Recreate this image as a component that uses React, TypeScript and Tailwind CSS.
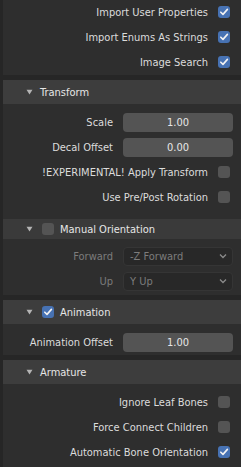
import React from "react";

const font = { fontFamily: '"DejaVu Sans Condensed", "DejaVu Sans", sans-serif' };

function Check({ on, className = "" }: { on: boolean; className?: string }) {
  return (
    <div
      className={
        "w-[12px] h-[12px] rounded-[3px] flex items-center justify-center shrink-0 " +
        (on ? "bg-[#4772b3]" : "bg-[#545454]") +
        " " +
        className
      }
    >
      {on && (
        <svg width="10" height="10" viewBox="0 0 10 10">
          <path d="M1.8 5.2 L4 7.4 L8.4 2.4" fill="none" stroke="#f2f2f2" strokeWidth="1.6" strokeLinecap="round" strokeLinejoin="round" />
        </svg>
      )}
    </div>
  );
}

function Tri() {
  return (
    <svg width="7" height="6" viewBox="0 0 7 6" className="shrink-0">
      <path d="M0.5 0.8 L6.5 0.8 L3.5 5.5 Z" fill="#b4b4b4" />
    </svg>
  );
}

function CheckRow({ label, on, className = "" }: { label: string; on: boolean; className?: string }) {
  return (
    <div className={"flex items-center justify-end h-[20px] pr-[11px] gap-[10px] " + className}>
      <span className="text-[#dcdcdc]">{label}</span>
      <Check on={on} />
    </div>
  );
}

function FieldRow({ label, value, className = "" }: { label: string; value: string; className?: string }) {
  return (
    <div className={"flex items-center h-[20px] gap-[10px] " + className}>
      <span className="w-[110px] text-right text-[#dcdcdc]">{label}</span>
      <div className="w-[110px] h-[19px] rounded-[4px] bg-[#545454] flex items-center justify-center text-[#e6e6e6]">
        {value}
      </div>
    </div>
  );
}

function DropRow({ label, value, className = "" }: { label: string; value: string; className?: string }) {
  return (
    <div className={"flex items-center h-[20px] gap-[10px] " + className}>
      <span className="w-[110px] text-right text-[#7c7c7c]">{label}</span>
      <div className="w-[110px] h-[19px] rounded-[4px] bg-[#282828] border border-[#353535] flex items-center justify-between pl-[6px] pr-[5px] text-[#7c7c7c]">
        <span>{value}</span>
        <svg width="8" height="6" viewBox="0 0 8 6">
          <path d="M1 1.5 L4 4.5 L7 1.5" fill="none" stroke="#8a8a8a" strokeWidth="1.3" />
        </svg>
      </div>
    </div>
  );
}

function Header({ label, check }: { label: string; check?: boolean }) {
  return (
    <div className="flex items-center h-[24px] bg-[#3d3d3d] pl-[23px]">
      <Tri />
      {check !== undefined ? (
        <>
          <Check on={check} className="ml-[9px]" />
          <span className="ml-[6px] text-[#e6e6e6]">{label}</span>
        </>
      ) : (
        <span className="ml-[7px] text-[#e6e6e6]">{label}</span>
      )}
    </div>
  );
}

export default function App() {
  return (
    <div className="w-[241px] h-[467px] bg-[#262626] pl-[3px] overflow-hidden text-[11px] leading-none" style={font}>
      <div className="flex flex-col gap-[5px]">
        {/* top panel */}
        <div className="bg-[#2e2e2e] pt-[2px] pb-[3px] flex flex-col gap-[5px]">
          <CheckRow label="Import User Properties" on />
          <CheckRow label="Import Enums As Strings" on />
          <CheckRow label="Image Search" on />
        </div>

        {/* Transform */}
        <div className="bg-[#2e2e2e]">
          <Header label="Transform" />
          <div className="pt-[8px] flex flex-col gap-[5px]">
            <FieldRow label="Scale" value="1.00" />
            <FieldRow label="Decal Offset" value="0.00" />
            <CheckRow label="!EXPERIMENTAL! Apply Transform" on={false} />
            <CheckRow label="Use Pre/Post Rotation" on={false} />
          </div>
          <div className="mt-[12px]">
            <div className="flex items-center h-[20px] bg-[#3a3a3a] pl-[23px]">
              <Tri />
              <Check on={false} className="ml-[9px]" />
              <span className="ml-[6px] text-[#e6e6e6]">Manual Orientation</span>
            </div>
            <div className="pt-[7px] pb-[4px] flex flex-col gap-[5px]">
              <DropRow label="Forward" value="-Z Forward" />
              <DropRow label="Up" value="Y Up" />
            </div>
          </div>
        </div>

        {/* Animation */}
        <div className="bg-[#2e2e2e]">
          <Header label="Animation" check />
          <div className="pt-[8px] pb-[3px]">
            <FieldRow label="Animation Offset" value="1.00" />
          </div>
        </div>

        {/* Armature */}
        <div className="bg-[#2e2e2e] h-[120px]">
          <Header label="Armature" />
          <div className="pt-[8px] flex flex-col gap-[5px]">
            <CheckRow label="Ignore Leaf Bones" on={false} />
            <CheckRow label="Force Connect Children" on={false} />
            <CheckRow label="Automatic Bone Orientation" on />
          </div>
        </div>
      </div>
    </div>
  );
}
